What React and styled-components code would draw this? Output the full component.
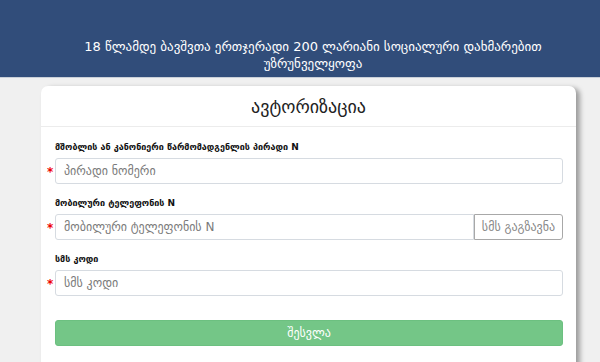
import React from 'react';
import styled, { createGlobalStyle } from 'styled-components';

const GlobalStyle = createGlobalStyle`
  html, body {
    margin: 0;
    padding: 0;
    background: #f0f0f0;
    font-family: "DejaVu Sans", "Noto Sans", sans-serif;
  }
`;

const Header = styled.header`
  height: 78px;
  background: #314d7a;
  border-bottom: 1px solid #c9cfd8;
  display: flex;
  flex-direction: column;
  justify-content: flex-end;
  padding: 0 30px 5px 56px;
  box-sizing: border-box;
  color: #fff;
  text-align: center;
  font-size: 13px;
  line-height: 17px;
`;

const Page = styled.main`
  padding: 8px 24px 0 41px;
`;

const Card = styled.section`
  width: 535px;
  background: #fff;
  border-radius: 7px 7px 0 0;
  box-shadow: 4px 2px 5px rgba(0, 0, 0, 0.35);
  padding-bottom: 20px;
`;

const CardTitle = styled.h1`
  margin: 0;
  height: 40px;
  border-bottom: 1px solid #ececec;
  display: flex;
  align-items: center;
  justify-content: center;
  font-weight: normal;
  font-size: 18px;
  color: #222;
`;

const Form = styled.form`
  padding: 15px 13px 0 14px;
  display: flex;
  flex-direction: column;
`;

const Field = styled.div`
  display: flex;
  flex-direction: column;
  margin-bottom: ${({ gap }) => gap || 14}px;
`;

const Label = styled.label`
  font-size: 9px;
  font-weight: bold;
  color: #111;
  margin-bottom: 6px;
`;

const InputRow = styled.div`
  position: relative;
  display: flex;
`;

const Star = styled.span`
  position: absolute;
  left: -8px;
  top: 7px;
  color: #e00;
  font-size: 12px;
  font-weight: bold;
`;

const Input = styled.input`
  flex: 1;
  height: 26px;
  box-sizing: border-box;
  border: 1px solid #d6dbe1;
  border-radius: ${({ attached }) => (attached ? '3px 0 0 3px' : '3px')};
  padding: 0 8px;
  font-family: inherit;
  font-size: 12px;
  color: #333;
  outline: none;
  &::placeholder {
    color: #7a7a7a;
  }
`;

const SmsButton = styled.button`
  width: 89px;
  height: 26px;
  box-sizing: border-box;
  border: 1px solid #a8a8a8;
  border-radius: 0 3px 3px 0;
  background: #fff;
  font-family: inherit;
  font-size: 12px;
  color: #888;
  padding: 0;
`;

const Submit = styled.button`
  height: 26px;
  border: 1px solid #6cc080;
  border-radius: 3px;
  background: #74c687;
  color: #fff;
  font-family: inherit;
  font-size: 12px;
`;

export default function App() {
  return (
    <>
      <GlobalStyle />
      <Header>
        <div>18 წლამდე ბავშვთა ერთჯერადი 200 ლარიანი სოციალური დახმარებით</div>
        <div>უზრუნველყოფა</div>
      </Header>
      <Page>
        <Card>
          <CardTitle>ავტორიზაცია</CardTitle>
          <Form>
            <Field>
              <Label>მშობლის ან კანონიერი წარმომადგენლის პირადი N</Label>
              <InputRow>
                <Star>*</Star>
                <Input placeholder="პირადი ნომერი" />
              </InputRow>
            </Field>
            <Field>
              <Label>მობილური ტელეფონის N</Label>
              <InputRow>
                <Star>*</Star>
                <Input attached placeholder="მობილური ტელეფონის N" />
                <SmsButton type="button">სმს გაგზავნა</SmsButton>
              </InputRow>
            </Field>
            <Field gap={24}>
              <Label>სმს კოდი</Label>
              <InputRow>
                <Star>*</Star>
                <Input placeholder="სმს კოდი" />
              </InputRow>
            </Field>
            <Submit type="button">შესვლა</Submit>
          </Form>
        </Card>
      </Page>
    </>
  );
}
